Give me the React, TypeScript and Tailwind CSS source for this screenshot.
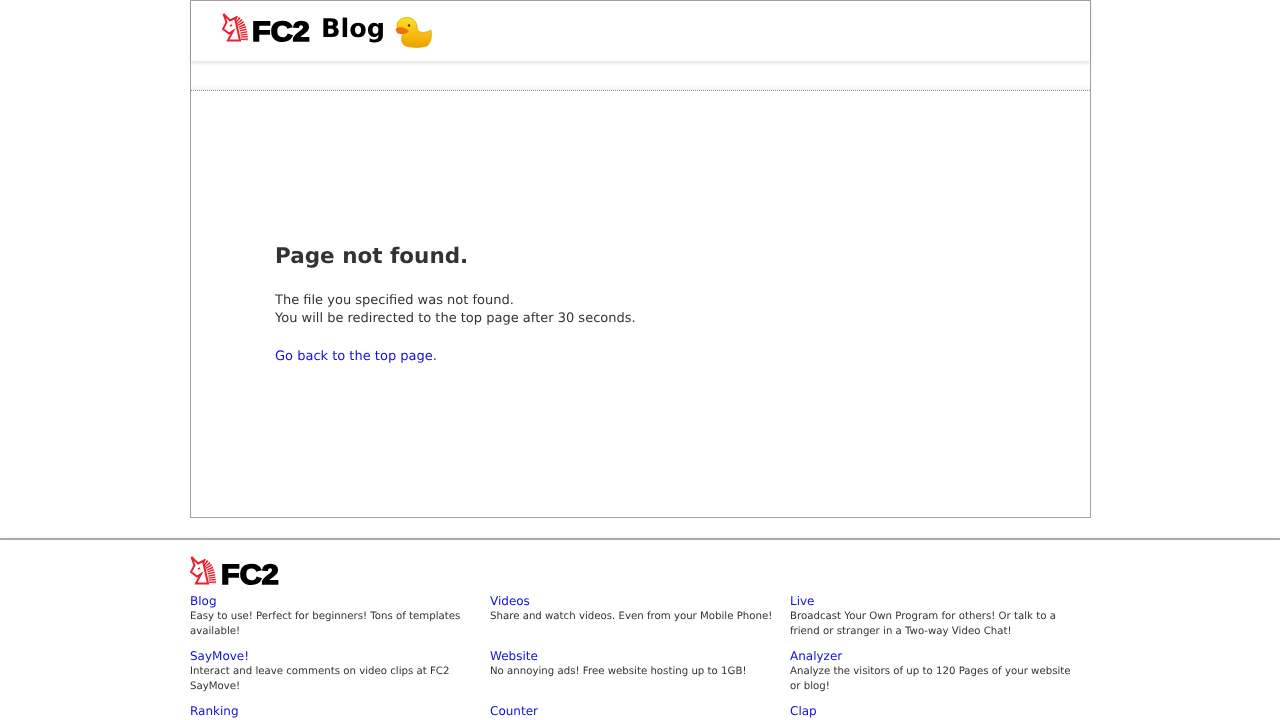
const services = [
  { name: 'Blog', text: 'Easy to use! Perfect for beginners! Tons of templates available!' },
  { name: 'Videos', text: 'Share and watch videos. Even from your Mobile Phone!' },
  { name: 'Live', text: 'Broadcast Your Own Program for others! Or talk to a friend or stranger in a Two-way Video Chat!' },
  { name: 'SayMove!', text: 'Interact and leave comments on video clips at FC2 SayMove!' },
  { name: 'Website', text: 'No annoying ads! Free website hosting up to 1GB!' },
  { name: 'Analyzer', text: 'Analyze the visitors of up to 120 Pages of your website or blog!' },
  { name: 'Ranking', text: '' },
  { name: 'Counter', text: '' },
  { name: 'Clap', text: '' },
];

function Unicorn({ className }: { className: string }) {
  return (
    <svg viewBox="0 0 27 29" className={className} fill="none" stroke="#e8212e" strokeLinejoin="miter">
      <path d="M13 6 Q22 9 22.5 28" strokeWidth="7" strokeDasharray="1.4 0.9" />
      <path d="M1.5 1 L8 7.5 L13 5 L18 27.5 L6 27.5 L11 18 L7 20.5 L1 16 L4.5 9.5 Z" strokeWidth="2" fill="#fff" />
      <path d="M8 13 L10 12" strokeWidth="1.6" />
    </svg>
  );
}

function Duck() {
  return (
    <svg viewBox="0 0 37 31" className="w-[37px] h-[31px]">
      <defs>
        <linearGradient id="duckBody" x1="0" y1="0" x2="0" y2="1">
          <stop offset="0" stopColor="#ffe020" />
          <stop offset="1" stopColor="#eea200" />
        </linearGradient>
      </defs>
      <path d="M2 9 C2 4 6 0.5 12 0.5 C18 0.5 22 5 22 10 C22 12 23 14 25 15 C29 16 33 15 36 13 C37 19 36 26 32 29 C26 31 13 31 9 28 C6 25 6 20 8 17 C5 15 2 12 2 9 Z" fill="url(#duckBody)" stroke="#dc9a00" strokeWidth="0.7" />
      <path d="M0.5 12 C4 9 10 10 14 14 C11 17.5 5 18 2 16 Z" fill="#f0700f" />
      <circle cx="14" cy="8.5" r="1.2" fill="#333" />
    </svg>
  );
}

function Logo({ unicorn, text }: { unicorn: string; text: string }) {
  return (
    <div className="flex items-end">
      <Unicorn className={unicorn} />
      <span className={text}>FC2</span>
    </div>
  );
}

export default function App() {
  return (
    <div className="h-[720px] overflow-hidden bg-white font-['DejaVu_Sans',sans-serif] text-[#333] [will-change:transform] [text-rendering:geometricPrecision]">
      <div className="ml-[190px] w-[901px] h-[518px] border border-[#a0a0a0]">
        <header className="relative z-10 h-[60px] flex items-start pl-[31px] pt-[12px] shadow-[0_2px_4px_rgba(0,0,0,0.12)]">
          <Logo
            unicorn="w-[27px] h-[29px]"
            text="ml-[3px] mb-[-6px] w-[59px] origin-left scale-x-[1.09] font-['Liberation_Sans',sans-serif] font-bold text-[28px] leading-[32px] text-black [-webkit-text-stroke:1.6px_black]"
          />
          <span className="ml-[10px] -mt-[1px] text-[25.6px] leading-[34px] font-bold text-black">Blog</span>
          <span className="ml-[10px] mt-[4px]"><Duck /></span>
        </header>
        <div className="h-[30px] border-b border-dotted border-[#8a8a8a] bg-linear-to-b from-white from-80% to-[#f4f4f4]" />
        <main className="pl-[84px] pt-[151px]">
          <h1 className="text-[21.5px] leading-[30px] font-bold">Page not found.</h1>
          <p className="mt-[20px] text-[13px] leading-[18px]">
            The file you specified was not found.
            <br />
            You will be redirected to the top page after 30 seconds.
          </p>
          <p className="mt-[20px] text-[13px] leading-[18px]">
            <a href="#" className="text-[#1010d8]">Go back to the top page</a>.
          </p>
        </main>
      </div>
      <footer className="mt-[20px] border-t-2 border-[#aaaaaa] shadow-[0_1px_3px_rgba(0,0,0,0.22)]">
        <div className="ml-[190px] w-[900px] pt-[16px]">
          <Logo
            unicorn="w-[27px] h-[29px]"
            text="ml-[4px] mb-[-6px] w-[59px] origin-left scale-x-[1.09] font-['Liberation_Sans',sans-serif] font-bold text-[28px] leading-[32px] text-black [-webkit-text-stroke:1.6px_black]"
          />
          <div className="grid grid-cols-3 mt-[9px]">
            {services.map((s) => (
              <div key={s.name} className="h-[55.2px] pr-[12px]">
                <a href="#" className="block text-[12px] leading-[14.8px] text-[#1010d8]">{s.name}</a>
                <p className="mt-[1.3px] text-[10.2px] leading-[14.7px] text-[#333]">{s.text}</p>
              </div>
            ))}
          </div>
        </div>
      </footer>
    </div>
  );
}
